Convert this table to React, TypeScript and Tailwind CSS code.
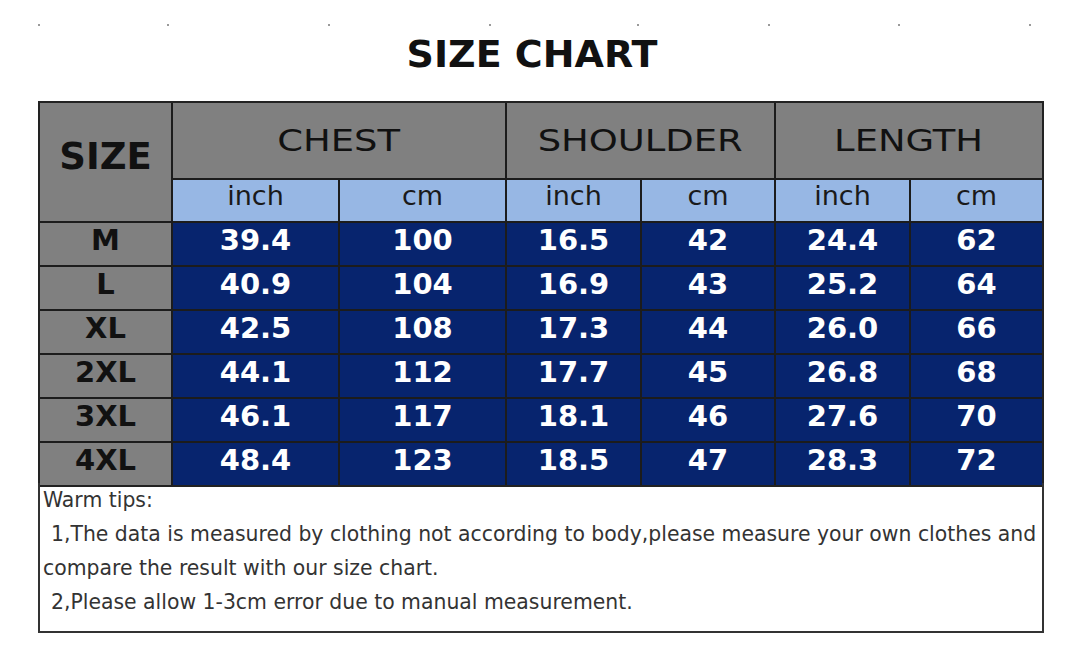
const sizes = [
  ["M", "39.4", "100", "16.5", "42", "24.4", "62"],
  ["L", "40.9", "104", "16.9", "43", "25.2", "64"],
  ["XL", "42.5", "108", "17.3", "44", "26.0", "66"],
  ["2XL", "44.1", "112", "17.7", "45", "26.8", "68"],
  ["3XL", "46.1", "117", "18.1", "46", "27.6", "70"],
  ["4XL", "48.4", "123", "18.5", "47", "28.3", "72"],
];

const dotGaps = ["ml-0", "ml-[127px]", "ml-[159px]", "ml-[159px]", "ml-[146px]", "ml-[129px]", "ml-[128px]", "ml-[129px]"];

const Group = ({ label, span }: { label: string; span: string }) => {
  return (
    <div className={`${span} bg-[#808080] flex items-center justify-center text-[31px] text-[#111]`}>
      <span className="inline-block scale-x-[1.19]">{label}</span>
    </div>
  );
};

const Unit = ({ label }: { label: string }) => {
  return (
    <div className="bg-[#97b7e4] flex items-center justify-center pb-[8px] text-[27px] text-[#1a1a1a]">
      {label}
    </div>
  );
};

const App = () => {
  return (
    <div className="w-[1080px] h-[652px] bg-white font-['DejaVu_Sans',sans-serif]">
      <div className="flex pt-[24px] pl-[38px]">
        {dotGaps.map((g, i) => (
          <span key={i} className={`${g} w-[2px] h-[2px] bg-[#9a9a9a]`} />
        ))}
      </div>
      <div className="mt-[6px] flex justify-center pr-[16px] text-[38px] leading-[44px] font-bold text-[#111]">
        SIZE CHART
      </div>
      <div className="ml-[38px] mt-[25px] w-[1006px]">
        <div className="grid grid-cols-[131px_165px_165px_133px_132px_133px_131px] grid-rows-[75px_41px_repeat(6,42px)] gap-[2px] border-2 border-[#222] bg-[#1c1c1c]">
          <div className="row-span-2 bg-[#808080] flex items-center justify-center pb-[10px] text-[37px] font-bold text-[#111]">
            SIZE
          </div>
          <Group label="CHEST" span="col-span-2" />
          <Group label="SHOULDER" span="col-span-2" />
          <Group label="LENGTH" span="col-span-2" />
          <Unit label="inch" />
          <Unit label="cm" />
          <Unit label="inch" />
          <Unit label="cm" />
          <Unit label="inch" />
          <Unit label="cm" />
          {sizes.map((row) =>
            row.map((v, i) => (
              <div
                key={row[0] + i}
                className={
                  i === 0
                    ? "bg-[#808080] flex items-center justify-center pb-[6px] text-[29px] font-bold text-[#111]"
                    : "bg-[#07246e] flex items-center justify-center pb-[6px] text-[29px] font-bold text-white"
                }
              >
                {v}
              </div>
            ))
          )}
        </div>
        <div className="h-[150px] border-2 border-t-0 border-[#333] pl-[3px] text-[20.4px] leading-[34px] text-[#333]">
          <div className="-mt-[4px]">Warm tips:</div>
          <div className="pl-[8px]">
            1,The data is measured by clothing not according to body,please measure your own clothes and
          </div>
          <div>compare the result with our size chart.</div>
          <div className="pl-[8px]">2,Please allow 1-3cm error due to manual measurement.</div>
        </div>
      </div>
    </div>
  );
};

export default App;
